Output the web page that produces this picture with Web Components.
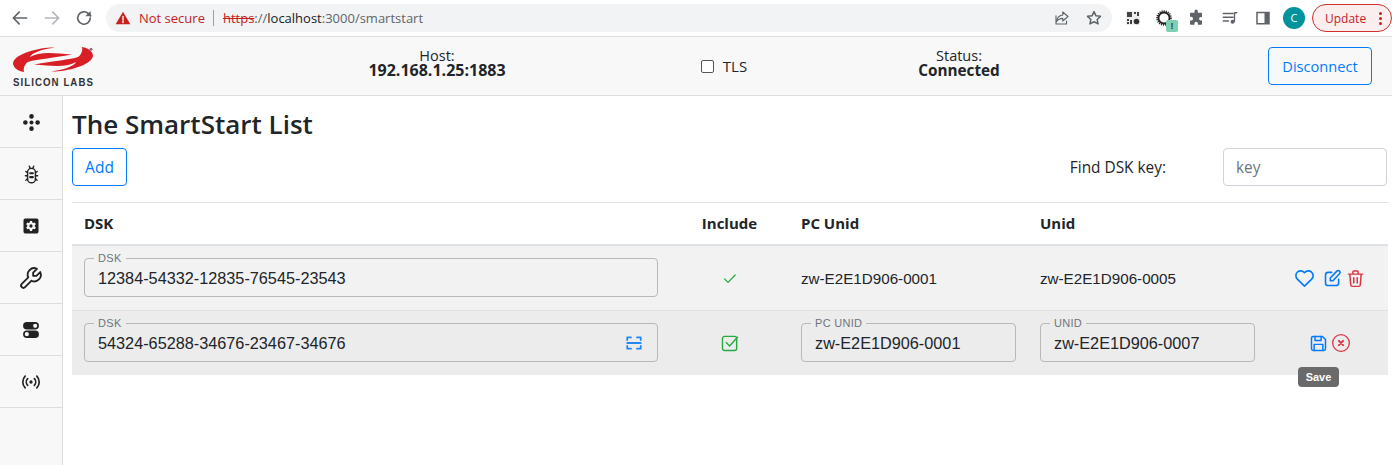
<!DOCTYPE html>
<html>
<head>
<meta charset="utf-8">
<title>SmartStart</title>
<style>
	html, body { margin: 0; height: 465px; overflow: hidden; background: #fff; }
	body { font-family: "Open Sans", "Noto Sans", sans-serif; color: #212529; }
</style>
</head>
<body>
<browser-bar></browser-bar>
<app-header></app-header>
<app-shell>
	<side-nav slot="nav"></side-nav>
	<smart-list></smart-list>
</app-shell>

<script>
(function() {
// icons are all on a 24 box, stroke unless "fill" is set on the element
const ICONS = {
	back: '<path d="M20 12H5M11 5l-7 7 7 7"/>',
	forward: '<path d="M4 12h15M13 5l7 7-7 7"/>',
	reload: '<path d="M19.500 12a7.500 7.500 0 1 1-2.200-5.300L20 9.500"/><path d="M20 3.500v6.500h-6.500" fill="currentColor" stroke="none"/>',
	share: '<path d="M13 4v4C7 9 5 13 4.500 17c2-3 5-4.500 8.500-4.500V16l7-6z"/><path d="M4 9v11h14v-4"/>',
	star: '<path d="M12 3.500l2.600 5.600 6 .7-4.400 4.100 1.200 6L12 17l-5.400 2.900 1.200-6-4.400-4.100 6-.7z"/>',
	heart: '<path d="M19.500 12.572 12 20l-7.500-7.428a5 5 0 1 1 7.500-6.566 5 5 0 1 1 7.500 6.572"/>',
	edit: '<path d="M11 5H7a3 3 0 0 0-3 3v9a3 3 0 0 0 3 3h9a3 3 0 0 0 3-3v-4"/><path d="M20 6.600a2 2 0 0 0-3-3L9.500 11.500V14.500H12.500z"/>',
	trash: '<path d="M4 7h16M10 11v6M14 11v6M5.500 7l1 12a2 2 0 0 0 2 2h7a2 2 0 0 0 2-2l1-12M9 7V4.500a1 1 0 0 1 1-1h4a1 1 0 0 1 1 1V7"/>',
	save: '<path d="M6 4h10.500L20 7.500V18a2 2 0 0 1-2 2H6a2 2 0 0 1-2-2V6a2 2 0 0 1 2-2z"/><path d="M8 4v4.500h7V4M7 20v-7h10v7"/>',
	cancel: '<circle cx="12" cy="12" r="10"/><path d="M9.500 9.500l5 5M14.500 9.500l-5 5" stroke-width="2.400"/>',
	check: '<path d="M5 12.500l5 5L20 7"/>',
	checkbox: '<rect x="3" y="4" width="17" height="17" rx="2.500"/><path d="M7.500 11.500l4 4L21 5"/>',
	scan: '<path d="M3 8V4.500h5M16 4.500h5V8M21 16v3.500h-5M8 19.500H3V16M3 12h18"/>',
	nodes: '<circle cx="12" cy="12" r="2.300" fill="currentColor" stroke="none"/><circle cx="12" cy="5" r="2.600" fill="currentColor" stroke="none"/><circle cx="12" cy="19" r="2.600" fill="currentColor" stroke="none"/><circle cx="5" cy="12" r="2.600" fill="currentColor" stroke="none"/><circle cx="19" cy="12" r="2.600" fill="currentColor" stroke="none"/>',
	bug: '<rect x="7.500" y="5" width="9" height="16.500" rx="4.500"/><path d="M9.500 2.500l1 2.500M14.500 2.500l-1 2.500M5.500 8.500l2 1.500M18.500 8.500l-2 1.500M5 13.500h2.500M19 13.500h-2.500M5.500 18.500l2-1.500M18.500 18.500l-2-1.500"/><path d="M10.500 10.500h3M10.500 15h3" stroke-width="2.400"/>',
	gear: '<path fill="currentColor" stroke="none" fill-rule="evenodd" d="M5 3h14a2 2 0 0 1 2 2v14a2 2 0 0 1-2 2H5a2 2 0 0 1-2-2V5a2 2 0 0 1 2-2zM10.800 6l-.4 1.800-1.300.7-1.700-.6-1.200 2.100 1.300 1.200v1.500l-1.300 1.200 1.200 2.100 1.700-.6 1.300.7.400 1.800h2.400l.4-1.800 1.300-.7 1.700.6 1.200-2.100-1.300-1.200v-1.500l1.300-1.200-1.200-2.100-1.700.6-1.300-.7-.4-1.800zM12 10a2 2 0 1 1 0 4 2 2 0 0 1 0-4z"/>',
	wrench: '<g transform="translate(24 0) scale(-1 1)"><path d="M7 10h3V7L6.500 3.500a6 6 0 0 1 8 8l6 6a2.100 2.100 0 0 1-3 3l-6-6a6 6 0 0 1-8-8L7 10"/></g>',
	toggles: '<path fill="currentColor" stroke="none" fill-rule="evenodd" d="M7 2.500h10a4.500 4.500 0 0 1 0 9H7a4.500 4.500 0 0 1 0-9zM17 4.500a2.500 2.500 0 1 0 0 5 2.500 2.500 0 0 0 0-5zM7 12.500h10a4.500 4.500 0 0 1 0 9H7a4.500 4.500 0 0 1 0-9zM7 14.500a2.500 2.500 0 1 0 0 5 2.500 2.500 0 0 0 0-5z"/>',
	broadcast: '<circle cx="12" cy="12" r="2" fill="currentColor" stroke="none"/><path d="M8 8a5.700 5.700 0 0 0 0 8M16 8a5.700 5.700 0 0 1 0 8M5 5a10 10 0 0 0 0 14M19 5a10 10 0 0 1 0 14"/>',
	puzzle: '<path fill="currentColor" stroke="none" d="M10 3a2.200 2.200 0 0 1 4.400 0v2H19a1 1 0 0 1 1 1v4.500h-1.500a2.400 2.400 0 0 0 0 4.800H20V20a1 1 0 0 1-1 1h-4.500v-1.600a2.300 2.300 0 0 0-4.600 0V21H5a1 1 0 0 1-1-1v-4.600h1.500a2.500 2.500 0 0 0 0-5H4V6a1 1 0 0 1 1-1h5z"/>',
	music: '<path d="M3 6h13M3 11h13M3 16h7M18 16V5h3"/><circle cx="15.500" cy="17" r="2.800" fill="currentColor" stroke="none"/>',
	panel: '<path fill="currentColor" stroke="none" fill-rule="evenodd" d="M3 3.500h18v17H3zM5 5.500v13h9v-13z"/>',
	warn: '<path fill="currentColor" stroke="none" d="M12 2.500 23 21.500H1z"/><path d="M12 9.500v6M12 17v2" stroke="#fff" stroke-width="2"/>'
};

class UiIcon extends HTMLElement {
	constructor() {
		super();
		const size = this.getAttribute("size") || 20;
		const sw = this.getAttribute("weight") || 2;
		this.attachShadow({mode: "open"}).innerHTML = `
			<style>
				:host { display: inline-flex; flex: none; width: ${size}px; height: ${size}px; }
				svg { width: 100%; height: 100%; fill: none; stroke: currentColor; stroke-width: ${sw}; stroke-linecap: round; stroke-linejoin: round; }
			</style>
			<svg viewBox="0 0 24 24">${ICONS[this.getAttribute("name")]}</svg>`;
	}
}
customElements.define("ui-icon", UiIcon);

const barTmpl = document.createElement("template");
barTmpl.innerHTML = `
<style>
	:host { display: flex; align-items: center; height: 36px; border-bottom: 1px solid #dadce0; box-sizing: content-box; background: #fff; color: #5f6368; font-family: "Open Sans", sans-serif; overflow: hidden; }
	.nav { display: flex; gap: 12px; padding-left: 10px; width: 106px; box-sizing: border-box; flex: none; }
	.omni { display: flex; align-items: center; width: 1006px; height: 28px; flex: none; background: #f1f3f4; border-radius: 14px; box-sizing: border-box; padding: 0 9px 0 9px; font-size: 13px; }
	.red { color: #c5221f; display: flex; align-items: center; gap: 8px; }
	.sep { width: 1px; height: 16px; background: #9aa0a6; margin: 0 9px 0 8px; }
	.url { color: #5f6368; }
	.url b { font-weight: 400; color: #202124; }
	.url s { color: #c5221f; }
	.end { margin-left: auto; display: flex; gap: 14px; align-items: center; }
	.tools { display: flex; align-items: center; margin-left: 12px; flex: none; }
	.qr { width: 14px; height: 14px; margin-right: 16px; flex: none; }
	.spin { position: relative; width: 16px; height: 16px; margin-right: 15px; flex: none; }
	.spin svg { display: block; width: 16px; height: 16px; }
	.badge { position: absolute; left: 10px; top: 10px; width: 12px; height: 12px; background: #7fcfb4; color: #1d4d3e; border-radius: 2px; font: 700 9px/12px "Liberation Sans", sans-serif; text-align: center; }
	.avatar { width: 22px; height: 22px; border-radius: 50%; background: #00939c; color: #fff; font-size: 11px; line-height: 22px; text-align: center; margin: 0 7px 0 11px; flex: none; }
	.update { display: flex; align-items: center; justify-content: space-between; width: 80px; height: 28px; box-sizing: border-box; border: 1px solid #d0302b; border-radius: 14px; background: #fbeeee; color: #c5221f; font-size: 12px; padding: 0 9px 0 12px; flex: none; }
	.dots { display: flex; flex-direction: column; gap: 2px; }
	.dots i { width: 3px; height: 3px; border-radius: 50%; background: #c5221f; }
</style>
<div class="nav">
	<ui-icon name="back" size="20"></ui-icon>
	<ui-icon name="forward" size="20" style="color:#b4b7bb"></ui-icon>
	<ui-icon name="reload" size="20"></ui-icon>
</div>
<div class="omni">
	<span class="red"><ui-icon name="warn" size="16"></ui-icon>Not secure</span>
	<span class="sep"></span>
	<span class="url"><s>https</s>://<b>localhost</b>:3000/smartstart</span>
	<span class="end">
		<ui-icon name="share" size="18" weight="1.500"></ui-icon>
		<ui-icon name="star" size="18" weight="2"></ui-icon>
	</span>
</div>
<div class="tools">
	<svg class="qr" viewBox="0 0 14 14" style="margin-left:2px"><rect width="14" height="14" fill="#eee"/><path d="M1 1h5v5H1zM8 1h2v2H8zM11 1h2v4h-2zM1 8h2v2H1zM4 9h2v4H4zM1 11h2v2H1z" fill="#444"/><circle cx="10.500" cy="10.500" r="2.800" fill="#333"/></svg>
	<span class="spin">
		<svg viewBox="0 0 16 16"><circle cx="8" cy="8" r="5.500" fill="none" stroke="#222" stroke-width="1.800"/><circle cx="8" cy="8" r="6.800" fill="none" stroke="#222" stroke-width="2" stroke-dasharray="1.100 1"/></svg>
		<span class="badge">!</span>
	</span>
	<ui-icon name="puzzle" size="18" style="margin-right:16px"></ui-icon>
	<ui-icon name="music" size="18" style="margin-right:15px" weight="1.800"></ui-icon>
	<ui-icon name="panel" size="18"></ui-icon>
	<span class="avatar">C</span>
	<span class="update">Update<span class="dots"><i></i><i></i><i></i></span></span>
</div>`;
class BrowserBar extends HTMLElement {
	constructor() {
		super();
		this.attachShadow({mode: "open"}).appendChild(barTmpl.content.cloneNode(true));
	}
}
customElements.define("browser-bar", BrowserBar);

const headerTmpl = document.createElement("template");
headerTmpl.innerHTML = `
<style>
	:host { display: grid; grid-template-columns: 300px 274px 300px 170px 1fr; align-items: center; height: 58px; background: #f8f8f8; border-bottom: 1px solid #dcdcdc; font-size: 14.500px; color: #212529; }
	.logo { align-self: start; padding: 10px 0 0 13px; display: flex; flex-direction: column; }
	.logo svg { display: block; width: 82px; height: 25px; }
	.logo span { font: 700 11px/11px "Liberation Sans", sans-serif; letter-spacing: 1.200px; color: #333; white-space: nowrap; margin-top: 5px; transform: scaleX(.88); transform-origin: left; }
	.kv { text-align: center; line-height: 15px; padding-bottom: 7px; }
	.kv b { display: block; font-weight: 700; font-size: 16px; }
	.kv b.sm { font-size: 15.300px; }
	.tls { display: flex; align-items: center; justify-content: center; gap: 9px; font-size: 15px; }
	.tls i { width: 11px; height: 11px; border: 1px solid #555; border-radius: 2px; background: #fff; }
	.act { display: flex; justify-content: flex-end; padding-right: 20px; }
	button { font: 14.600px "Open Sans", sans-serif; color: #007bff; background: transparent; border: 1px solid #007bff; border-radius: 4px; height: 38px; width: 104px; padding: 0; }
</style>
<div class="logo">
	<svg viewBox="0 0 82 25">
		<path fill="#d91f26" d="M42 .5C28 0 2 6 0 16c0 4 4 8 11 9-1-4 1-8 4-10 7-2.500 25-4 44-7.500C45 6.500 35 5 25 7c-4 1-6 2-8 3C18 6 30 2 42 .5z"/>
		<path fill="#d91f26" transform="rotate(180 40 12.500)" d="M42 .5C28 0 2 6 0 16c0 4 4 8 11 9-1-4 1-8 4-10 7-2.500 25-4 44-7.500C45 6.500 35 5 25 7c-4 1-6 2-8 3C18 6 30 2 42 .5z"/>
		<circle cx="78" cy="2.300" r="1.500" fill="#777"/>
	</svg>
	<span>SILICON LABS</span>
</div>
<div class="kv">Host:<b>192.168.1.25:1883</b></div>
<div class="tls"><i></i>TLS</div>
<div class="kv">Status:<b class="sm">Connected</b></div>
<div class="act"><button>Disconnect</button></div>`;
class AppHeader extends HTMLElement {
	constructor() {
		super();
		this.attachShadow({mode: "open"}).appendChild(headerTmpl.content.cloneNode(true));
	}
}
customElements.define("app-header", AppHeader);

class AppShell extends HTMLElement {
	constructor() {
		super();
		this.attachShadow({mode: "open"}).innerHTML = `
			<style>
				:host { display: flex; height: 369px; }
			</style>
			<slot name="nav"></slot><slot></slot>`;
	}
}
customElements.define("app-shell", AppShell);

class SideNav extends HTMLElement {
	constructor() {
		super();
		const sizes = {nodes: 21, bug: 21, gear: 20, wrench: 26, toggles: 20, broadcast: 20};
		this.attachShadow({mode: "open"}).innerHTML = `
			<style>
				:host { display: block; flex: none; width: 62px; background: #f8f8f8; border-right: 1px solid #dcdcdc; }
				div { display: flex; align-items: center; justify-content: center; box-sizing: border-box; height: 52px; padding-top: 1px; border-bottom: 1px solid #dcdcdc; color: #222; }
				div:first-child { height: 53px; }
			</style>
			${Object.keys(sizes).map(n => `<div><ui-icon name="${n}" size="${sizes[n]}" weight="${n == "wrench" ? 1.700 : n == "bug" ? 1.600 : 2}"></ui-icon></div>`).join("")}`;
	}
}
customElements.define("side-nav", SideNav);

class OutlinedField extends HTMLElement {
	constructor() {
		super();
		this.attachShadow({mode: "open"}).innerHTML = `
			<style>
				:host { display: block; color: #212529; }
				fieldset { display: flex; align-items: center; margin: 0; padding: 0 13px 0 13px; height: 45px; box-sizing: border-box; border: 1px solid #b8b8b8; border-radius: 4px; background: transparent; }
				legend { padding: 0 4px 0 4px; margin-left: -4px; font: 11px/12px "Liberation Sans", sans-serif; letter-spacing: .3px; color: #6c757d; }
				.v { flex: 1; font: 16.250px/20px "Liberation Sans", sans-serif; white-space: nowrap; margin-top: -5px; }
			</style>
			<fieldset><legend>${this.getAttribute("label")}</legend><span class="v">${this.getAttribute("value")}</span><slot></slot></fieldset>`;
	}
}
customElements.define("outlined-field", OutlinedField);

class ListRow extends HTMLElement {
	constructor() {
		super();
		this.attachShadow({mode: "open"}).innerHTML = `
			<style>
				:host { display: grid; grid-template-columns: 598px 119px 239px 239px 121px; align-items: center; box-sizing: border-box; height: var(--row-h, 65px); border-bottom: var(--row-line, 1px solid #dee2e6); background: var(--row-bg, #f2f2f2); font: 15.200px "Liberation Sans", sans-serif; }
				::slotted(*) { padding: 0 12px; box-sizing: border-box; }
			</style>
			<slot></slot>`;
	}
}
customElements.define("list-row", ListRow);

const listTmpl = document.createElement("template");
listTmpl.innerHTML = `
<style>
	:host { display: block; flex: 1; min-width: 0; padding: 11px 4px 0 9px; }
	h1 { margin: 0 0 7px; font-size: 26px; line-height: 34px; font-weight: 600; }
	.tools { display: flex; align-items: center; padding-bottom: 16px; padding-right: 1px; border-bottom: 1px solid #dee2e6; font-size: 15.400px; }
	button { font: 15.500px "Open Sans", sans-serif; color: #007bff; background: transparent; border: 1px solid #007bff; border-radius: 4px; height: 38px; width: 55px; padding: 0; }
	.find { margin-left: auto; margin-right: 57px; }
	.key { width: 164px; height: 38px; box-sizing: border-box; border: 1px solid #ced4da; border-radius: 4px; padding: 0 12px; line-height: 37px; color: #6c757d; }
	.head { display: grid; grid-template-columns: 598px 119px 239px 239px 121px; align-items: center; box-sizing: content-box; height: 39px; padding-bottom: 2px; border-bottom: 2px solid #dee2e6; font-weight: 700; font-size: 15px; }
	.head span { padding: 0 12px; }
	.mid { text-align: center; }
	.inc { display: flex; justify-content: center; color: #28a745; }
	.field { padding-top: 6px !important; padding-bottom: 13px !important; align-self: start; }
	.acts { display: flex; align-items: center; height: 24px; position: relative; }
	.blue { color: #007bff; }
	.red { color: #dc3545; }
	.tip { position: absolute; left: 31px; top: 36px; width: 41px; height: 20px; background: #6a6a6a; color: #fff; border-radius: 4px; font: 700 11px/20px "Liberation Sans", sans-serif; text-align: center; }
	.scan { color: #1e88f5; margin: -5px 1px 0 0; }
</style>
<h1>The SmartStart List</h1>
<div class="tools">
	<button>Add</button>
	<span class="find">Find DSK key:</span>
	<div class="key">key</div>
</div>
<div class="head">
	<span>DSK</span><span class="mid">Include</span><span>PC Unid</span><span>Unid</span><span></span>
</div>
<list-row>
	<div class="field"><outlined-field label="DSK" value="12384-54332-12835-76545-23543"></outlined-field></div>
	<div class="inc"><ui-icon name="check" size="17" weight="1.800"></ui-icon></div>
	<div>zw-E2E1D906-0001</div>
	<div>zw-E2E1D906-0005</div>
	<div class="acts" style="padding-left:25.500px">
		<ui-icon class="blue" name="heart" size="23" weight="1.700"></ui-icon>
		<ui-icon class="blue" name="edit" size="21" weight="1.800" style="margin-left:6px"></ui-icon>
		<ui-icon class="red" name="trash" size="21" weight="1.700" style="margin-left:2px"></ui-icon>
	</div>
</list-row>
<list-row style="--row-bg:#ececec; --row-h:64px; --row-line:none">
	<div class="field"><outlined-field label="DSK" value="54324-65288-34676-23467-34676"><ui-icon class="scan" name="scan" size="18" weight="2.400"></ui-icon></outlined-field></div>
	<div class="inc"><ui-icon name="checkbox" size="20" weight="1.700"></ui-icon></div>
	<div class="field"><outlined-field label="PC UNID" value="zw-E2E1D906-0001"></outlined-field></div>
	<div class="field"><outlined-field label="UNID" value="zw-E2E1D906-0007"></outlined-field></div>
	<div class="acts" style="padding-left:40.500px">
		<ui-icon class="blue" name="save" size="21" weight="1.700"></ui-icon>
		<ui-icon class="red" name="cancel" size="20" weight="1.600" style="margin-left:2.500px"></ui-icon>
		<span class="tip">Save</span>
	</div>
</list-row>`;
class SmartList extends HTMLElement {
	constructor() {
		super();
		this.attachShadow({mode: "open"}).appendChild(listTmpl.content.cloneNode(true));
	}
}
customElements.define("smart-list", SmartList);
})();
</script>
</body>
</html>
